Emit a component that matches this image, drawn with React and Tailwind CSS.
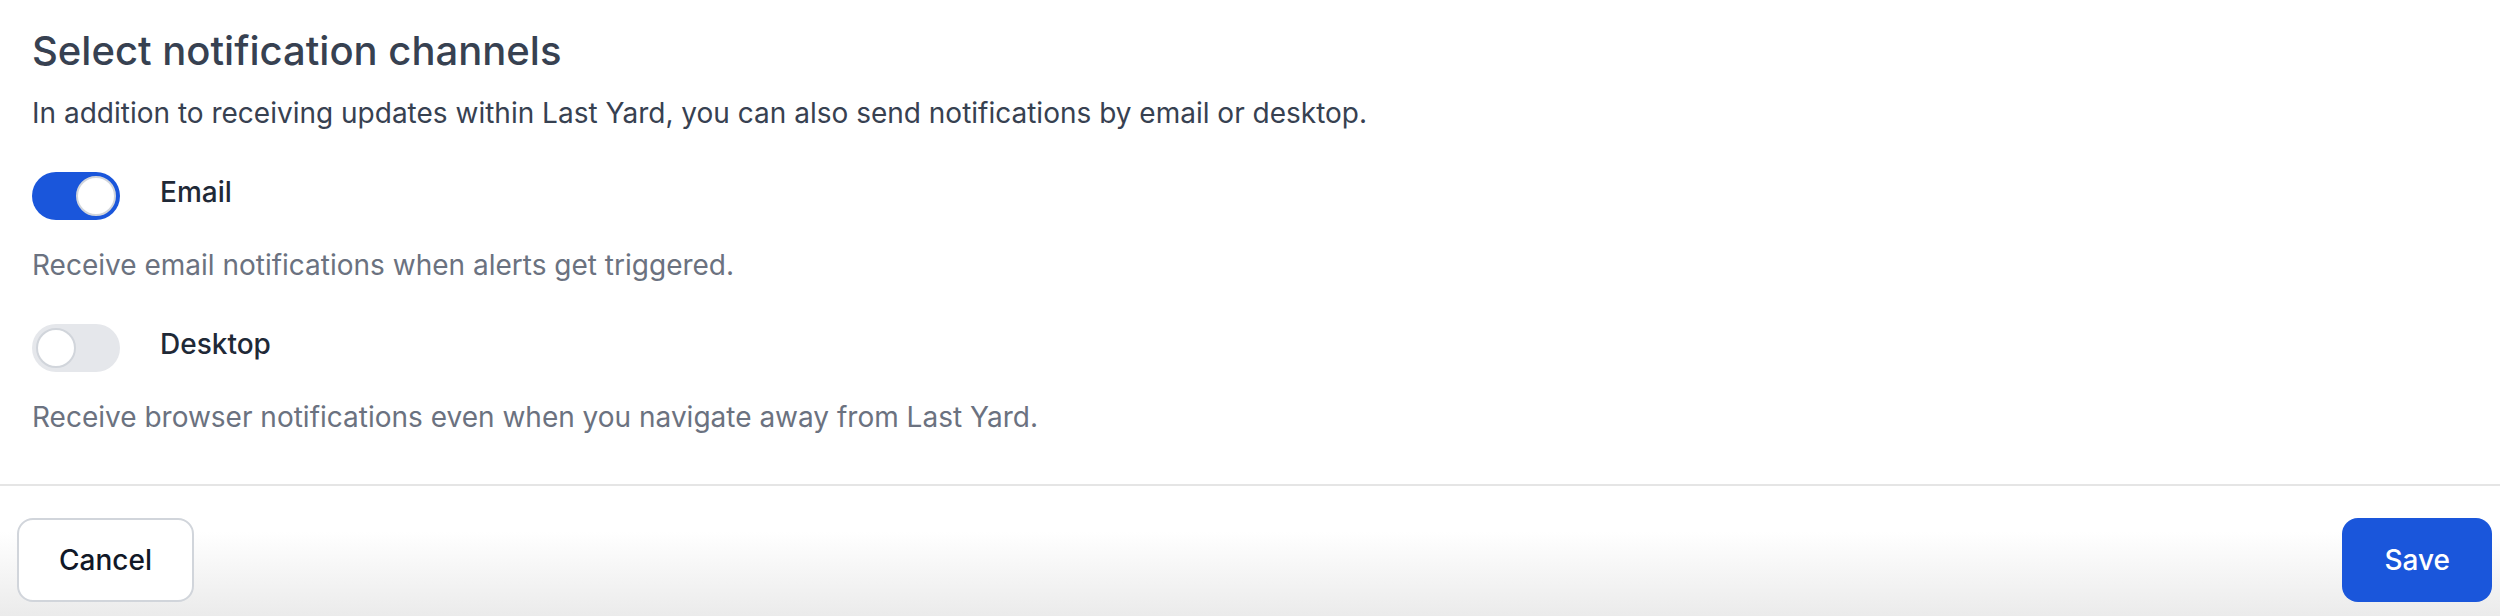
import { useState } from "react";

function Toggle({ on, onChange }) {
    return (
        <button
            type="button"
            onClick={onChange}
            className={`relative w-[88px] h-12 shrink-0 rounded-full ${on ? "bg-[#1a56db]" : "bg-[#e5e7eb]"}`}
        >
            <span
                className={`absolute top-1 left-1 w-10 h-10 rounded-full bg-white border-2 border-[#d1d5db] ${on ? "translate-x-10" : ""}`}
            ></span>
        </button>
    );
}

function Channel({ label, text, on, onChange, className }) {
    return (
        <div className={className}>
            <div className="flex items-start">
                <Toggle on={on} onChange={onChange} />
                <span className="ml-10 text-[28px] leading-[40px] font-medium text-[#1f2937]">{label}</span>
            </div>
            <p className="mt-[25px] text-[28px] leading-[40px] text-[#6b7280]">{text}</p>
        </div>
    );
}

export default function App() {
    const [email, setEmail] = useState(true);
    const [desktop, setDesktop] = useState(false);

    return (
        <div className="w-[2500px] h-[616px] bg-white flex flex-col font-['Inter',sans-serif] overflow-hidden">
            <div className="px-8 pt-[23px] pb-[47px]">
                <h2 className="text-[40px] leading-[56px] font-medium text-[#374151]">Select notification channels</h2>
                <p className="mt-[14px] text-[28px] leading-[40px] text-[#374151]">
                    In addition to receiving updates within Last Yard, you can also send notifications by email or desktop.
                </p>
                <Channel
                    className="mt-[39px]"
                    label="Email"
                    text="Receive email notifications when alerts get triggered."
                    on={email}
                    onChange={() => setEmail(!email)}
                />
                <Channel
                    className="mt-[39px]"
                    label="Desktop"
                    text="Receive browser notifications even when you navigate away from Last Yard."
                    on={desktop}
                    onChange={() => setDesktop(!desktop)}
                />
            </div>
            {/* footer */}
            <div className="grow flex items-start justify-between border-t-2 border-[#e5e5e5] pt-8 pl-[17px] pr-2 bg-linear-to-b from-white from-[35%] to-[#ebebeb]">
                <button className="px-10 py-5 rounded-2xl border-2 border-[#d1d5db] bg-white text-[28px] leading-[40px] font-medium text-[#111827]">
                    Cancel
                </button>
                <button className="px-10 py-5 rounded-2xl border-2 border-transparent bg-[#1a56db] text-[28px] leading-[40px] font-medium text-white">
                    Save
                </button>
            </div>
        </div>
    );
}
